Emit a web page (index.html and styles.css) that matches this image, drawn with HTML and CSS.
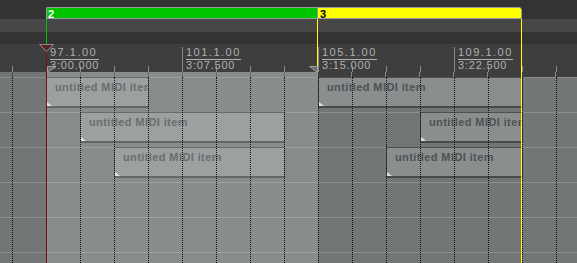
FILE: index.html
```html
<!DOCTYPE html>
<html lang="en">
<head>
    <meta charset="UTF-8">
    <meta name="viewport" content="width=device-width, initial-scale=1.0">
    <title>Arrange View</title>
    <link rel="stylesheet" href="styles.css">
</head>
<body>
    <div class="arrange-view">
        <!-- Region lane -->
        <div class="region-lane">
            <div class="region green">2</div>
            <div class="region yellow">3</div>
        </div>
        <div class="lane-mid"></div>
        <div class="lane-dark"></div>

        <!-- Ruler -->
        <div class="ruler">
            <div class="ruler-lead"></div>
            <div class="bar"><div class="bar-label"><div class="pos">97.1.00</div><div class="time">3:00.000</div></div></div>
            <div class="bar"><div class="bar-label"><div class="pos">101.1.00</div><div class="time">3:07.500</div></div></div>
            <div class="bar"><div class="bar-label"><div class="pos">105.1.00</div><div class="time">3:15.000</div></div></div>
            <div class="bar"><div class="bar-label"><div class="pos">109.1.00</div><div class="time">3:22.500</div></div></div>
        </div>

        <!-- Tracks -->
        <div class="arrange">
            <div class="sel-strip">
                <div class="strip-left"></div>
                <div class="strip-right"></div>
            </div>
            <div id="tracks"></div>
            <div class="time-selection"></div>
            <div class="grid" id="grid"></div>
        </div>

        <!-- Markers and cursor -->
        <div class="marker-line region-start"></div>
        <div class="marker-line region-split"></div>
        <div class="marker-line region-end"></div>
        <div class="marker-line play-cursor"></div>
        <svg class="cursor-head" width="15" height="8" viewBox="0 0 15 8">
            <polygon points="0.5,0.5 14.5,0.5 7.5,7.5" fill="#5a2424" stroke="#8c8c8c"/>
        </svg>
        <svg class="sel-mark sel-start" width="9" height="7" viewBox="0 0 9 7">
            <polygon points="0.5,0.5 8.5,0.5 0.5,6.5" fill="#6a6a6a" stroke="#a0a0a0"/>
        </svg>
        <svg class="sel-mark sel-end" width="9" height="7" viewBox="0 0 9 7">
            <polygon points="0.5,0.5 8.5,0.5 8.5,6.5" fill="#6a6a6a" stroke="#a0a0a0"/>
        </svg>
    </div>

    <script>
        // start / len in beats, beat 0 sits at x = 12
        const items = [
            { track: 0, start: 1, len: 3 },
            { track: 1, start: 2, len: 6 },
            { track: 2, start: 3, len: 5 },
            { track: 0, start: 9, len: 6 },
            { track: 1, start: 12, len: 3 },
            { track: 2, start: 11, len: 4 }
        ];
        const trackCount = 6;

        const tracks = document.getElementById('tracks');
        for (let t = 0; t < trackCount; t++) {
            const row = document.createElement('div');
            row.classList.add('track');
            items.filter(item => item.track === t).forEach(item => {
                const el = document.createElement('div');
                el.classList.add('item');
                el.style.gridColumn = `${item.start + 2} / span ${item.len}`;
                el.textContent = 'untitled MIDI item';
                row.appendChild(el);
            });
            tracks.appendChild(row);
        }

        const grid = document.getElementById('grid');
        for (let i = 0; i < 17; i++) {
            const col = document.createElement('div');
            col.classList.add('grid-col');
            grid.appendChild(col);
        }
    </script>
</body>
</html>
```

FILE: styles.css
```css
body {
    margin: 0;
    padding: 0;
    background-color: #333333;
    font-family: "Liberation Sans", Arial, sans-serif;
}
.arrange-view {
    position: relative;
    width: 577px;
    height: 263px;
    overflow: hidden;
    background-color: #333333;
}
.region-lane {
    display: flex;
    height: 19px;
    padding: 7px 0 0 46px;
    box-sizing: border-box;
    background-color: #333333;
}
.region {
    height: 12px;
    box-sizing: border-box;
    border: 1px solid #9c9c9c;
    font-size: 11px;
    font-weight: bold;
    line-height: 12px;
}
.region.green {
    width: 271px;
    background-color: #00c400;
    color: white;
    padding-left: 1px;
    border-right: none;
    border-top-left-radius: 2px;
}
.region.yellow {
    width: 205px;
    background-color: #ffff00;
    color: black;
    padding-left: 2px;
    border-top-right-radius: 3px;
}
.lane-mid {
    height: 13px;
    background-color: #474747;
}
.lane-dark {
    height: 12px;
    background-color: #333333;
}
.ruler {
    display: flex;
    height: 28px;
    background-color: #3e3e3e;
    overflow: hidden;
}
.ruler-lead {
    width: 46px;
    flex-shrink: 0;
    background: linear-gradient(#8a8a8a, #8a8a8a) 12px 22px / 1px 6px no-repeat;
}
.bar {
    width: 136px;
    flex-shrink: 0;
    box-sizing: border-box;
    margin-top: 3px;
    border-left: 1px solid #8a8a8a;
    background: repeating-linear-gradient(90deg, transparent 0 33px, #8a8a8a 33px 34px) left bottom / 100% 6px no-repeat;
}
.bar-label {
    display: inline-block;
    margin-left: 3px;
    color: #b0b0b0;
    font-size: 11px;
    line-height: 11px;
}
.bar-label .pos {
    padding-bottom: 1px;
    border-bottom: 1px solid #b0b0b0;
    letter-spacing: 1.5px;
}
.bar-label .time {
    letter-spacing: 0.8px;
}
.arrange {
    position: relative;
    height: 191px;
    overflow: hidden;
    background-color: #727676;
}
.sel-strip {
    display: flex;
    height: 5px;
}
.strip-left {
    width: 318px;
    background: #727676 repeating-linear-gradient(90deg, transparent 0 12px, #505454 12px 13px, transparent 13px 34px);
}
.strip-right {
    flex: 1;
    background: #3e3e3e repeating-linear-gradient(90deg, transparent 0 33px, #8a8a8a 33px 34px);
}
.track {
    display: grid;
    grid-template-columns: 12px repeat(17, 34px);
    height: 35px;
    background: #727676 linear-gradient(#8c9090, #8c9090) top left / 100% 1px no-repeat;
}
.item {
    position: relative;
    grid-row: 1;
    align-self: start;
    height: 31px;
    margin-right: -1px;
    box-sizing: border-box;
    padding: 3px 0 0 8px;
    background-color: #8a8e8e;
    border: 1px solid #4c5050;
    border-bottom: 2px solid #464a4a;
    color: #4e5252;
    font-size: 11px;
    font-weight: bold;
    line-height: 13px;
    letter-spacing: 0.4px;
    white-space: nowrap;
    overflow: hidden;
}
.item::after {
    content: "";
    position: absolute;
    left: 0;
    bottom: 0;
    border-left: 5px solid #dfe3e3;
    border-top: 4px solid transparent;
}
.time-selection {
    position: absolute;
    top: 0;
    bottom: 0;
    left: 46px;
    width: 272px;
    background-color: rgba(255, 255, 255, 0.16);
}
.grid {
    position: absolute;
    top: 5px;
    bottom: 0;
    left: 0;
    display: flex;
    padding-left: 12px;
}
.grid-col {
    width: 34px;
    flex-shrink: 0;
    box-sizing: border-box;
    border-left: 1px dotted #111111;
}
.marker-line {
    position: absolute;
    width: 1px;
}
.region-start {
    left: 46px;
    top: 19px;
    height: 28px;
    background-color: #00c400;
}
.region-split {
    left: 317px;
    top: 19px;
    height: 53px;
    background-color: #ffff00;
}
.region-end {
    left: 521px;
    top: 19px;
    bottom: 0;
    background-color: #ffff00;
}
.play-cursor {
    left: 46px;
    top: 51px;
    bottom: 0;
    background-color: #761212;
}
.cursor-head {
    position: absolute;
    left: 39px;
    top: 44px;
}
.sel-mark {
    position: absolute;
    top: 66px;
}
.sel-start {
    left: 47px;
}
.sel-end {
    left: 309px;
}
```
